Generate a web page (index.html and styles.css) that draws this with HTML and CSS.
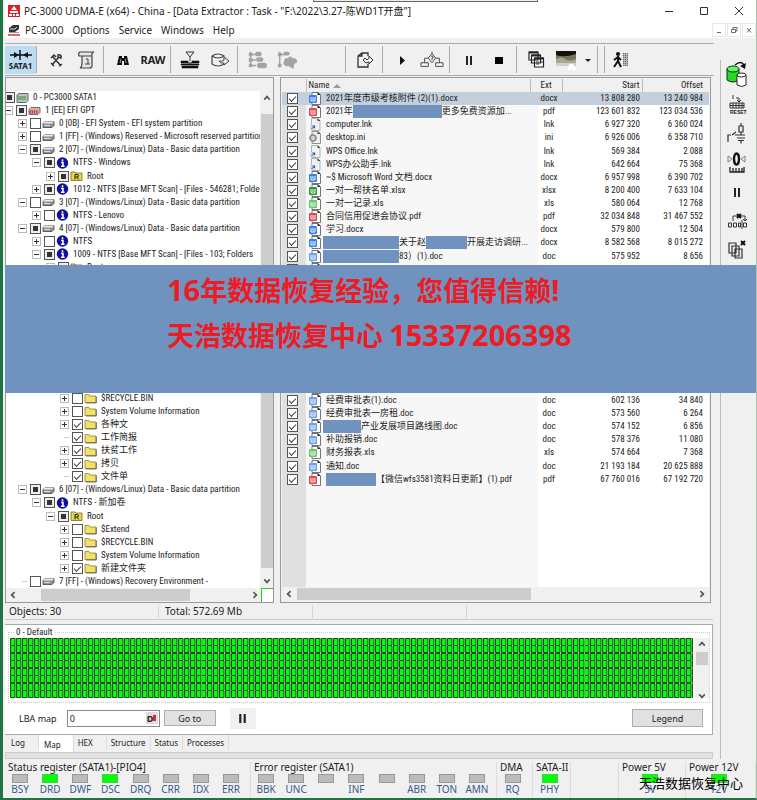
FILE: index.html
```html
<!DOCTYPE html>
<html lang="zh-CN">
<head>
<meta charset="utf-8">
<meta name="viewport" content="width=device-width, initial-scale=1">
<title>PC-3000 UDMA-E</title>
<link rel="stylesheet" href="styles.css">
</head>
<body>
<svg class="sprite" aria-hidden="true">
  <symbol id="i-disk" viewBox="0 0 13 11"><path d="M1 5 3 3h9v4l-2 2H1z" fill="#8f8f8f" stroke="#444" stroke-width=".8"/><path d="M1 5 3 3h9l-1.500 2z" fill="#ececec"/><path d="M2 7h6" stroke="#ddd"/></symbol>
  <symbol id="i-disk0" viewBox="0 0 13 11"><path d="M1 2.500 3 1h9v7l-2 2H1z" fill="#b9c9b9" stroke="#444" stroke-width=".8"/><path d="M2 4.500h8M2 6.500h8" stroke="#3b8a4a"/></symbol>
  <symbol id="i-gpt" viewBox="0 0 13 11"><path d="M1 4 3 2h9v5l-2 2H1z" fill="#d9b0b0" stroke="#555" stroke-width=".8"/><path d="M1.500 5h8v3h-8z" fill="#c23a3a"/><path d="M3 6.500h1m1 0h1m1 0h1" stroke="#fff"/></symbol>
  <symbol id="i-info" viewBox="0 0 13 13"><circle cx="6.500" cy="6.500" r="6.200" fill="#10109a"/><path d="M6.500 2.500v2M5 6h2v3.500M4.800 10h4" stroke="#fff" stroke-width="1.700" fill="none"/></symbol>
  <symbol id="i-folder" viewBox="0 0 13 11"><path d="M1 2h4l1 1.500h6V10H1z" fill="#f0e26a" stroke="#8b8424" stroke-width=".8"/><path d="M12.300 4v6.500H2" stroke="#555" fill="none" stroke-width=".8"/></symbol>
  <symbol id="i-root" viewBox="0 0 13 11"><path d="M1 1.500h4l1 1h6V10H1z" fill="#e2d64a" stroke="#77701c" stroke-width=".8"/><path d="M5 9V4h2q1.500 0 1.500 1.300T7 6.500H5M7 6.500 8.700 9" stroke="#222" fill="none"/></symbol>
  <symbol id="i-doc" viewBox="0 0 12 13"><path d="M3 .5h6l2.500 2.500v9.500H3z" fill="#fff" stroke="#666" stroke-width=".9"/><path d="M8.500 0v3h3z" fill="#222"/><rect x="0" y="3" width="8" height="8" rx="1" fill="var(--tag)"/><path d="M2 5v4h4V5M4 5v3" stroke="#fff" stroke-width=".9" fill="none"/></symbol>
  <symbol id="i-lnk" viewBox="0 0 12 13"><path d="M2.500.5h6l2.500 2.500v9.500H2.500z" fill="#f2f2f2" stroke="#aaa" stroke-width=".9"/><path d="M8.500 0v3h3z" fill="#444"/><path d="M1 7h6v5H1z" fill="#cfdbea"/><path d="M2.500 11l3-3M3.500 8h2v2" stroke="#24579d" fill="none"/></symbol>
  <symbol id="i-ini" viewBox="0 0 12 13"><path d="M3 .5h6l2.500 2.500v9.500H3z" fill="#eee" stroke="#888" stroke-width=".9"/><path d="M8.500 0v3h3z" fill="#444"/><circle cx="4" cy="7" r="3.300" fill="#aaa" stroke="#777"/><path d="M2.500 6h3M2.500 8h3" stroke="#fff"/></symbol>
</svg>

<div class="window">
  <header class="titlebar">
    <svg class="app-icon" viewBox="0 0 12 12"><path fill="#e11c2a" d="M0 0h12v12H0z"/><path d="M6 1 9 5H3zM2 6h8v2H2zM1 9h3v2H1zm4 0h2v2H5zm3 0h3v2H8z" fill="#fff"/></svg>
    <h1 class="title">PC-3000 UDMA-E (x64) - China - [Data Extractor : Task - "F:\2022\3.27-陈WD1T开盘"]</h1>
    <div class="drop-edge"></div>
    <div class="caption">
      <button type="button" aria-label="Minimize"><svg viewBox="0 0 10 10"><path d="M1 5.500h8"/></svg></button>
      <button type="button" aria-label="Maximize"><svg viewBox="0 0 10 10"><path d="M1.500 1.500h7v7h-7z"/></svg></button>
      <button type="button" aria-label="Close"><svg viewBox="0 0 10 10"><path d="m1 1 8 8M9 1 1 9"/></svg></button>
    </div>
  </header>
  <nav class="menubar">
    <svg class="app-icon" viewBox="0 0 12 12"><path d="M1 4 5 1h6v4L7 8H1z" fill="#333"/><path d="M2 5h5l2-2" stroke="#ddd" fill="none"/><path d="M1 8.500h10" stroke="#999"/><path d="M0 11h12" stroke="#d33" stroke-width="1.500"/></svg>
    <a href="#">PC-3000</a><a href="#">Options</a><a href="#">Service</a><a href="#">Windows</a><a href="#">Help</a>
    <div class="mdi">
      <button type="button" aria-label="Minimize child"><svg viewBox="0 0 8 8"><path d="M2 6.500h4"/></svg></button>
      <button type="button" aria-label="Restore child"><svg viewBox="0 0 8 8"><path d="M3 3V1.500h4V5H5.500M1.500 3.500h4v3h-4z"/></svg></button>
      <button type="button" aria-label="Close child"><svg viewBox="0 0 8 8"><path d="m2 2 4 4.500M6 2 2 6.500"/></svg></button>
    </div>
  </nav>

  <div class="body">
    <main class="main">
      <div class="toolbar">
        <div class="group first"><button type="button" class="port"><svg viewBox="0 0 24 12"><path d="M1 6h22M11 1v10" stroke="#111" stroke-width="1.500"/><path d="M5 3v6l5-3zM19 3v6l-5-3z" fill="#111"/></svg><span>SATA1</span></button></div>
        <div class="group">
          <button type="button" aria-label="Settings"><svg viewBox="0 0 20 20"><path d="M6 15 13 7M7 7l8 9M5 8l3-3 2 2M12 5c2-1 4 1 3 3l-3-1zM5 13l3 3M13 16l3-2" stroke="#333" stroke-width="1.500" fill="none"/></svg></button>
          <button type="button" aria-label="Script"><svg viewBox="0 0 20 20"><path d="M4 2h14q-3 1-2 5v9q0 2-3 2H4q2-1 2-4V6H3q-1-3 1-4zM6 6h10" stroke="#444" stroke-width="1.200" fill="#e6e6e6"/><path d="M10 9h2v5M9 14h5" stroke="#444" fill="none"/></svg></button>
        </div>
        <div class="group">
          <button type="button" aria-label="Find"><svg viewBox="0 0 20 20"><path d="m4 15 2-9h3v2h2V6h3l2 9h-5v-4H9v4z" fill="#111"/><path d="m7 13 1-4m5 4-.5-4" stroke="#ddd" stroke-width=".7"/></svg></button>
          <button type="button" class="raw">RAW</button>
        </div>
        <div class="group">
          <button type="button" aria-label="Filter to disk"><svg viewBox="0 0 20 20"><path d="M6 2h8l-4 5zM10 7v4" stroke="#333" fill="none"/><path d="M1 11h7v2h4v-2h7v2H1zM1 14h18v1H1zM2 16h16v2H2z" fill="#111" stroke="#111" stroke-width=".6"/></svg></button>
          <button type="button" aria-label="Disk copy"><svg viewBox="0 0 20 20"><path d="M2 6v8q6 4 12 0v-2M2 6q6-4 12 0-6 4-12 0" stroke="#444" stroke-width="1.200" fill="none"/><path d="M9 11q3 1 5-1V7l5 4-5 4v-2q-3 1-5-2z" fill="#eee" stroke="#444"/></svg></button>
        </div>
        <div class="group wide">
          <button type="button" aria-label="Build map" disabled><svg viewBox="0 0 22 22"><path d="M4 2v14M4 5h6M4 11h6M4 17h6" stroke="#a3a3a3" stroke-width="1.500"/><path d="M2 3h4v4H2zm0 6h4v4H2zm0 6h4v4H2z" fill="#a3a3a3"/><rect x="9" y="2" width="7" height="5" rx="2" fill="#a3a3a3"/><rect x="10" y="8" width="8" height="5" rx="2" fill="#a3a3a3"/><rect x="11" y="14" width="11" height="6" rx="3" fill="#a3a3a3"/></svg></button>
          <button type="button" aria-label="Map objects" disabled><svg viewBox="0 0 22 22"><path d="M3 2v17M3 5h6" stroke="#a3a3a3" stroke-width="1.500"/><path d="M1 3h4v4H1zm0 12h4v4H1z" fill="#a3a3a3"/><rect x="7" y="2" width="7" height="4" rx="2" fill="#a3a3a3"/><path d="M9 9h3l2-2 4 2q5 0 4 5l-3 1-1 6-5-3q-6 0-6-4z" fill="#a3a3a3"/></svg></button>
        </div>
        <div class="group">
          <button type="button" aria-label="Export"><svg viewBox="0 0 20 20"><path d="M13 6V3H7L3 6v11h10v-3M3 6h4V3" stroke="#333" stroke-width="1.300" fill="none"/><path d="m8 10 3 3 3-1v2l4-4-4-4v2l-2 2-2-2z" fill="#eee" stroke="#333"/></svg></button>
        </div>
        <div class="group">
          <button type="button" aria-label="Start"><svg viewBox="0 0 20 20"><path d="m8 6 5 4.500L8 15z" fill="#111"/></svg></button>
          <button type="button" aria-label="Process options" class="big"><svg viewBox="0 0 26 20"><path d="m13 3 4 5-4 5-4-5zM13 1v2M9 8H5v5M17 8h4v5M1 13h8v4H1zM17 13h8v4h-8z" stroke="#444" fill="none"/><path d="M12 6h2v2h-1v2" stroke="#444" fill="none"/></svg></button>
        </div>
        <div class="group">
          <button type="button" aria-label="Pause"><svg viewBox="0 0 20 20"><path d="M7 6h2v9H7zm4 0h2v9h-2z" fill="#222"/></svg></button>
          <button type="button" aria-label="Stop"><svg viewBox="0 0 20 20"><path d="M6 7h8v7H6z" fill="#000"/></svg></button>
        </div>
        <div class="group">
          <button type="button" aria-label="Windows"><svg viewBox="0 0 20 20"><path d="M3 2h9v8H3zM5.500 5h9v8h-9zM8.500 8h9v9h-9z" fill="#fff" stroke="#222" stroke-width="1.200"/><path d="M3 2.500h9M5.500 5.500h9M8.500 8.500h9" stroke="#222" stroke-width="2"/><path d="M10 12h3m2 0h2m-7 2h3" stroke="#333"/></svg></button>
          <button type="button" aria-label="Picture" class="big"><svg viewBox="0 0 22 20"><path fill="#111" d="M1 1h20v7H1z"/><path fill="#77745c" d="M1 5q8 3 20-1v7H1z"/><path fill="#a9a993" d="M1 9q5-3 9 0t11 0v5H1z"/><path fill="#cfd0cc" d="M1 13h20v3H1z"/><path d="M14 14h4l4 6h-9z" fill="#fff"/></svg></button>
          <button type="button" aria-label="More" class="arrow"><svg viewBox="0 0 10 10"><path d="M2 4h6L5 7z" fill="#222"/></svg></button>
        </div>
        <div class="group narrow"></div>
        <div class="group last">
          <button type="button" aria-label="Exit"><svg viewBox="0 0 20 20"><path d="M13 3h5v13h-5z" fill="#b5b5b5"/><path d="M13.500 3v13M15.500 3v13M17.500 3v13" stroke="#666" stroke-dasharray="1 1"/><circle cx="8" cy="4" r="2" fill="#111"/><path d="M8 6v5l3 6M8 11l-4 6M4 10l4-3 3 3" stroke="#111" stroke-width="2" fill="none"/></svg></button>
        </div>
      </div>

      <div class="work">
        <section class="pane tree-pane" aria-label="Partitions">
          <div class="tree-head"></div>
          <div class="tree-body">
            <div class="tree" id="tree"></div>
            <div class="vscroll"><span class="chev up"></span><span class="thumb"></span><span class="chev down"></span></div>
          </div>
          <div class="hscroll"><span class="chev left"></span><span class="thumb"></span><span class="chev right"></span><span class="corner"></span></div>
        </section>
        <section class="pane file-pane" aria-label="Files">
          <div class="file-body">
            <table class="files">
              <colgroup><col class="c-check"><col class="c-name"><col class="c-ext"><col class="c-start"><col class="c-offset"></colgroup>
              <thead><tr><th></th><th class="name">Name <span class="sort"></span></th><th class="ext">Ext</th><th>Start</th><th>Offset</th></tr></thead>
              <tbody id="files"></tbody>
            </table>
          </div>
          <div class="hscroll"><span class="chev left"></span><span class="thumb"></span><span class="chev right"></span></div>
        </section>
      </div>

      <div class="summary"><span>Objects: 30</span><span>Total: 572.69 Mb</span><span></span><span></span></div>

      <section class="map-pane">
        <fieldset class="map-box"><legend>0 - Default</legend>
          <div class="map"></div>
          <div class="vscroll"><span class="chev up"></span><span class="thumb"></span><span class="chev down"></span></div>
        </fieldset>
        <div class="map-controls">
          <label for="lba">LBA map</label>
          <div class="lba-field"><input id="lba" type="text" value="0"><button type="button" aria-label="Decimal"><b>D</b><i></i></button></div>
          <button type="button" class="btn goto">Go to</button>
          <button type="button" class="hold" aria-label="Pause map"><svg viewBox="0 0 10 10"><path d="M2 1h2v8H2zm4 0h2v8H6z" fill="#222"/></svg></button>
          <button type="button" class="btn legend-btn">Legend</button>
        </div>
      </section>
      <div class="tabs"><button type="button">Log</button><button type="button" class="on">Map</button><button type="button">HEX</button><button type="button">Structure</button><button type="button">Status</button><button type="button">Processes</button></div>
      <div class="splitter"></div>
    </main>

    <aside class="side">
      <button type="button" aria-label="Copy disk"><svg viewBox="0 0 24 28"><path d="M2 9v11q6 4 12 0V9" fill="#27d827" stroke="#222"/><ellipse cx="8" cy="9" rx="6" ry="3" fill="#5f5" stroke="#222"/><path d="M12 15v10q5 3 9 0V15" fill="#fff" stroke="#222"/><ellipse cx="16.500" cy="15" rx="4.500" ry="2" fill="#fff" stroke="#222"/><path d="M10 5q6-5 9 0" stroke="#111" stroke-width="1.500" fill="none"/><path d="m21 3-1 6-5-3z" fill="#111"/></svg></button>
      <button type="button" aria-label="Reset"><svg viewBox="0 0 24 24"><path d="M8 2v4M11 5h3v4m-2-2 2 2 2-2" stroke="#333" fill="none"/><path d="M5 10h14v5H5zM8 10v5m3-5v5m3-5v5m3-5v5M5 12.500h14" stroke="#333" fill="none"/><text x="5" y="21" class="reset">RESET</text></svg></button>
      <button type="button" aria-label="Power"><svg viewBox="0 0 24 24"><path d="M3 20v-7h3M7 13l4-3M10 13h10M16 13v-3M14 4h4v6h-4zM16 1v3M12 16h8M13 18.500h6M16 18.500v3" stroke="#333" stroke-width="1.200" fill="none"/></svg></button>
      <button type="button" aria-label="Recalibrate"><svg viewBox="0 0 24 24"><ellipse cx="11.500" cy="8" rx="2.500" ry="5.500" stroke="#111" stroke-width="2.300" fill="none"/><path d="m3 5 4 3-4 3zM20 5l-4 3 4 3z" stroke="#666" fill="none" stroke-width=".8"/><path d="M5 16v5h14v-5M8 21v-4m3 4v-4m3 4v-4m3 4v-4" stroke="#222" stroke-width="1.300" fill="none"/></svg></button>
      <button type="button" aria-label="Hold"><svg viewBox="0 0 24 24"><path d="M9 8h2v9H9zm4 0h2v9h-2z" fill="#222"/></svg></button>
      <button type="button" aria-label="Chain"><svg viewBox="0 0 24 24"><path d="M3.500 14h3v4h-3zm5 0h3v4h-3zm5 0h2v4h-2zM17 11v9M18.500 14h3v4h-3zM8 12V7h12v5m-2-2 2 2 2-2" stroke="#333" fill="none"/><path d="m12 5 4 4m0-4-4 4" stroke="#111" stroke-width="2"/></svg></button>
      <button type="button" aria-label="Close copies"><svg viewBox="0 0 24 24"><path d="M4 5h7v10H4zM7 8h7v10H7zM10 11h7v9h-7z" fill="#eee" stroke="#333" stroke-width="1.200"/><path d="m16 3 4 4m0-4-4 4" stroke="#111" stroke-width="2"/></svg></button>
    </aside>
  </div>

  <footer class="registers" id="registers"></footer>

  <div class="banner"><p><span>16</span>年数据恢复经验，您值得信赖<span>!</span></p><p>天浩数据恢复中心 <span>15337206398</span></p></div>
  <div class="watermark">天浩数据恢复中心</div>
</div>
<script src="app.js"></script>
</body>
</html>
```

FILE: styles.css
```css
* { box-sizing: border-box; }
:root {
  --ui: "Noto Sans", "Noto Sans CJK SC", sans-serif;
  --list: "Roboto Condensed", "Open Sans Condensed", "Liberation Sans", "Noto Sans CJK SC", sans-serif;
  --cover: #6f92be;
}
body { margin: 0; background: #f0f0f0; color: #222; font: 10px/13px var(--ui); }
button, input { font: inherit; color: inherit; margin: 0; padding: 0; }
button { border: 0; background: none; display: flex; align-items: center; justify-content: center; }
a { color: inherit; text-decoration: none; }
.sprite { position: absolute; width: 0; height: 0; }

.window { position: relative; min-height: 100vh; display: flex; flex-direction: column; border: solid #217346; border-width: 0 0 2px 3px; border-right: 1px solid #a9c4b3; padding-left: 2px; overflow: hidden; }
.titlebar { position: relative; display: flex; align-items: center; height: 22px; background: #fff; padding-left: 3px; }
.app-icon { width: 12px; height: 12px; flex: none; }
.title { margin: 0 0 0 4px; font-size: 10px; font-weight: 400; white-space: nowrap; }
.drop-edge { position: absolute; left: 41%; top: 0; width: 30%; height: 2px; border: solid #666; border-width: 0 1px 1px; background: #eee; }
.caption { display: flex; margin-left: auto; }
.caption button { width: 35px; height: 20px; }
.caption svg { width: 10px; height: 10px; fill: none; stroke: #333; }
.menubar { display: flex; align-items: center; gap: 9px; height: 16px; background: #fff; padding-left: 3px; }
.menubar .app-icon { margin-right: -4px; }
.mdi { display: flex; gap: 1px; margin-left: auto; }
.mdi button { width: 14px; height: 14px; border: 1px solid #e8e8e8; }
.mdi svg { width: 8px; height: 8px; fill: none; stroke: #667; }

.body { flex: 1; display: flex; }
.main { flex: 1; min-width: 0; display: flex; flex-direction: column; padding-top: 5px; }
.side { width: 36px; margin-top: 22px; border-left: 1px solid #bbb; display: flex; flex-direction: column; align-items: center; gap: 5px; padding-right: 3px; }
.side svg { width: 24px; height: 24px; display: block; }
.side button:first-child svg { height: 28px; }
.reset { font: bold 5px "Liberation Sans", sans-serif; fill: #222; }

.toolbar { display: flex; height: 33px; margin-right: 6px; border: solid #aaa; border-width: 1px 0; }
.group { display: flex; align-items: center; margin: 2px 0; padding: 0 2px 0 4px; border-right: 1px solid #aaa; }
.group button { width: 30px; height: 28px; }
.group svg { width: 20px; height: 20px; }
.group .big svg { width: 24px; }
.group .arrow { width: 14px; }
.group .arrow svg { width: 10px; height: 10px; }
.group.first { padding: 0; }
.group.wide { width: 108px; }
.group.narrow { padding: 0 3px; }
.group.last { border: 0; padding: 0; }
.group .port { width: 31px; flex-direction: column; background: #bcdcf4; font-weight: 700; font-size: 8px; line-height: 9px; }
.group .port svg { width: 24px; height: 12px; }
.group .raw { font-weight: 700; font-size: 11px; }

.work { flex: 1; display: flex; gap: 6px; padding: 1px 9px 0 0; }
.pane { display: flex; flex-direction: column; border: 1px solid #999; background: #fff; min-width: 0; }
.tree-pane { width: 269px; flex: none; }
.tree-head { height: 13px; background: #f0f0f0; }
.tree-body { flex: 1; display: flex; }
.tree { flex: 1; min-width: 0; display: flex; flex-direction: column; overflow: hidden; font: 9px/13px var(--list); }
.row { flex: 1; display: flex; align-items: center; height: 13px; white-space: nowrap; }
.row label { display: flex; align-items: center; }
.row svg { width: 13px; height: 12px; margin: 0 4px 0 1px; flex: none; }
.exp { position: relative; width: 9px; height: 9px; flex: none; margin-right: 3px; border: 1px solid #bbb; background: linear-gradient(#333, #333) center / 5px 1px no-repeat #fff; }
.exp.plus { background: linear-gradient(#333, #333) center / 5px 1px no-repeat, linear-gradient(#333, #333) center / 1px 5px no-repeat #fff; }
.exp.none { border: 0; background: linear-gradient(#ccc, #ccc) right center / 5px 1px no-repeat; }
.l0 { margin-left: -14px; }
.l1 { margin-left: -2px; }
.l2 { margin-left: 12px; }
.l3 { margin-left: 26px; }
.l4 { margin-left: 40px; }
.l5 { margin-left: 54px; }

input[type="checkbox"] { appearance: none; width: 11px; height: 11px; flex: none; margin: 0; border: 1px solid #555; background: #fff; display: block; }
input[type="checkbox"]:checked::after { content: ""; display: block; width: 6px; height: 3px; margin: 2px 0 0 1px; border: solid #444; border-width: 0 0 1px 1px; rotate: -45deg; }
input[type="checkbox"].part { background: linear-gradient(#333, #333) center / 5px 5px no-repeat #eee; }

.chev { width: 6px; height: 6px; border: solid #555; border-width: 2px 0 0 2px; flex: none; scale: .8; }
.up { rotate: 45deg; }
.down { rotate: 225deg; }
.left { rotate: -45deg; }
.right { rotate: 135deg; }
.thumb { background: #cdcdcd; }
.vscroll { width: 13px; display: flex; flex-direction: column; align-items: center; background: #f0f0f0; padding: 5px 0; }
.vscroll .thumb { width: 12px; flex: 1; margin: 12px 0 9px; }
.hscroll { height: 14px; display: flex; align-items: center; background: #f0f0f0; padding: 0 5px; }
.hscroll .thumb { height: 12px; }
.tree-pane .hscroll { padding-right: 0; }
.tree-pane .thumb { margin-left: 24px; }
.tree-pane .hscroll .thumb { width: 149px; }
.tree-pane .vscroll .thumb { margin-left: 0; }
.tree-pane .right { margin-left: auto; }
.corner { width: 12px; height: 14px; margin-left: 4px; border: solid #1fd01f; border-width: 1px 0 0 1px; background: #fff; }

.file-pane { flex: 1; padding: 1px; background: #f0f0f0; }
.file-body { flex: 1; min-height: 0; background: linear-gradient(90deg, #e0e0e0 24px, #f7f7f7 24px 256px, #fff 256px); }
.files { width: 100%; height: 407px; table-layout: fixed; border-collapse: collapse; font: 9px/13px var(--list); }
.c-check { width: 24px; }
.c-ext { width: 32px; }
.c-start { width: 80px; }
.c-offset { width: 67px; }
.files th, .files td { padding: 0 2px; font-weight: 400; text-align: right; white-space: nowrap; overflow: hidden; }
.files td:last-child, .files th:last-child { padding-right: 6px; }
.files th { background: #f0f0f0; border-right: 1px solid #bbb; }
.files th:last-child { border-right: 0; }
.files .name { text-align: left; }
.files .ext { text-align: center; }
.files td.ext { padding-left: 8px; }
.files td.check { padding: 0 0 0 5px; }
.files .on td { background: #c3d0dc; }
.sort { display: inline-block; border: solid transparent; border-width: 0 4px 4px; border-bottom-color: #999; margin-left: 2px; vertical-align: middle; }
.file { display: flex; align-items: center; height: 13px; padding-left: 1px; }
.file svg { width: 12px; height: 13px; flex: none; margin-right: 5px; }
.w { --tag: #3b82e8; }
.p { --tag: #e2484c; }
.x { --tag: #2f9e3a; }
.y { --tag: #67c66b; }
.d { --tag: #6aa3f0; }
.hide { flex: none; height: 13px; background: var(--cover); }
.h38 { width: 38px; margin-left: -3px; }
.h41 { width: 41px; }
.h50 { width: 50px; }
.h76 { width: 76px; margin-left: -3px; }
.h89 { width: 89px; }
.file-pane .hscroll .thumb { width: 56%; margin-left: 4px; }
.file-pane .right { margin-left: auto; }

.summary { display: flex; height: 17px; align-items: center; margin-right: 7px; border-bottom: 1px solid #ccc; }
.summary span { width: 154px; height: 13px; padding-left: 4px; border-right: 1px solid #d4d4d4; }
.summary span + span { padding-left: 6px; }
.summary span:last-child { border: 0; }

.map-pane { margin: 4px 7px 0 0; padding: 2px 2px 4px 3px; background: #fff; border: solid #aaa; border-width: 1px 1px 1px 0; }
.map-box { min-width: 0; margin: 0; padding: 0 0 4px 1px; border: 1px dotted #ccc; display: flex; font: 9px/11px var(--list); }
.map-box legend { margin-left: 4px; padding: 0 2px; }
.map { flex: 1; height: 60px; background: url("data:image/svg+xml,%3Csvg xmlns='http://www.w3.org/2000/svg' viewBox='0 0 12 16' preserveAspectRatio='none'%3E%3Cpath fill='%23c4e0c4' d='M0 0h12v16H0z'/%3E%3Cpath fill='%2300ff0a' stroke='%23125012' stroke-width='2' d='M1 1h9v14H1z'/%3E%3C/svg%3E") 0 0 / 6px 8px round; }
.map-box .vscroll { width: 15px; margin-left: 1px; padding: 4px 0 0; }
.map-box .vscroll .thumb { flex: none; height: 13px; margin: 4px 0 auto; }
.map-controls { display: flex; align-items: center; height: 24px; margin-top: 3px; padding: 0 7px 0 11px; font-size: 9px; }
.lba-field { display: flex; align-items: center; width: 93px; height: 17px; margin: 0 4px 0 10px; border: 1px solid #888; padding-right: 1px; }
.lba-field input { flex: 1; min-width: 0; border: 0; outline: 0; padding-left: 2px; background: none; }
.lba-field button { width: 12px; height: 12px; background: #ddd; }
.lba-field i { width: 3px; height: 6px; background: #e22; }
.btn { width: 52px; height: 16px; background: #e1e1e1; border: 1px solid #adadad; }
.legend-btn { width: 71px; height: 18px; margin-left: auto; }
.hold { width: 26px; height: 21px; margin-left: 14px; background: #f0f0f0; }
.hold svg { width: 11px; height: 11px; }

.tabs { display: flex; height: 17px; align-items: flex-start; }
.tabs button { height: 15px; padding: 0 4px; border-right: 1px solid #ddd; font: 8px/13px var(--ui); }
.tabs button:nth-child(1) { padding: 0 13px 0 6px; }
.tabs .on { height: 17px; background: #fff; padding: 2px 12px 0 5px; }
.tabs button:nth-child(3) { padding-right: 13px; }
.splitter { height: 7px; margin-right: 7px; background: #e2e2e2; border: 1px solid #ccc; }

.registers { display: flex; height: 39px; padding-top: 3px; }
.reg { position: relative; border-right: 1px solid #ddd; height: 36px; }
.reg h2 { margin: 0; padding-left: 3px; height: 12px; font: 10px/11px var(--ui); white-space: nowrap; }
.leds { display: flex; justify-content: space-around; height: 24px; padding-right: 4px; }
.led { width: 30px; text-align: center; color: #39598c; font: 10px/13px var(--ui); }
.led i { display: block; width: 16px; height: 9px; margin: 0 auto; background: #bbb; border: 1px solid #999; }
.led.lit i { background: #0f0; border-color: #4c4; }
.g-status { width: 246px; }
.g-error { width: 246px; }
.g-dma { width: 36px; }
.g-sata { width: 38px; }
.g-5v { width: 68px; margin-left: auto; border-left: 1px solid #ddd; }
.g-12v { width: 70px; }

.banner { position: absolute; left: 2px; right: -1px; top: 265px; height: 128px; padding: 2px 0 0 162px; background: #6f92be; }
.banner p { margin: 0; font: bold 27px/45px "Noto Sans CJK SC", sans-serif; color: #ed1c24; white-space: nowrap; }
.banner span { font-family: "Noto Sans", sans-serif; font-size: 29px; }
.watermark { position: absolute; right: 13px; bottom: 5px; font: 13px/20px "Noto Sans CJK SC", sans-serif; color: #000; }
```

FILE: app.js
```js
// Tree rows: level, expander (+ - or none), state (0 empty, 1 ticked, 2 partial), icon, label
const tree = [
  [0, " ", 2, "disk0", "0 - PC3000 SATA1"],
  [1, "-", 2, "gpt", "1 [EE] EFI GPT"],
  [2, "+", 0, "disk", "0 [0B] - EFI System - EFI system partition"],
  [2, "+", 0, "disk", "1 [FF] - (Windows) Reserved - Microsoft reserved partition"],
  [2, "-", 2, "disk", "2 [07] - (Windows/Linux) Data - Basic data partition"],
  [3, "-", 2, "info", "NTFS - Windows"],
  [4, "+", 2, "root", "Root"],
  [3, "+", 2, "info", "1012 - NTFS [Base MFT Scan] - [Files - 546281; Folders"],
  [2, "-", 0, "disk", "3 [07] - (Windows/Linux) Data - Basic data partition"],
  [3, "+", 0, "info", "NTFS - Lenovo"],
  [2, "-", 2, "disk", "4 [07] - (Windows/Linux) Data - Basic data partition"],
  [3, "+", 0, "info", "NTFS"],
  [3, "-", 2, "info", "1009 - NTFS [Base MFT Scan] - [Files - 103; Folders"],
  [4, "+", 2, "root", "Root"],
  ...Array(9).fill(null),
  [5, "+", 0, "folder", "$RECYCLE.BIN"],
  [5, "+", 0, "folder", "System Volume Information"],
  [5, "+", 1, "folder", "各种文"],
  [5, " ", 1, "folder", "工作简报"],
  [5, "+", 1, "folder", "扶贫工作"],
  [5, "+", 1, "folder", "拷贝"],
  [5, " ", 1, "folder", "文件单"],
  [2, "-", 2, "disk", "6 [07] - (Windows/Linux) Data - Basic data partition"],
  [3, "-", 2, "info", "NTFS - 新加卷"],
  [4, "-", 2, "root", "Root"],
  [5, "+", 0, "folder", "$Extend"],
  [5, "+", 0, "folder", "$RECYCLE.BIN"],
  [5, "+", 0, "folder", "System Volume Information"],
  [5, "+", 1, "folder", "新建文件夹"],
  [2, " ", 0, "disk", "7 [FF] - (Windows) Recovery Environment -"],
];
const expander = { "+": "plus", "-": "minus", " ": "none" };
document.getElementById("tree").innerHTML = tree.map(r => {
  if (!r) return '<div class="row"></div>';
  const [level, exp, state, icon, text] = r;
  return `<div class="row l${level}"><span class="exp ${expander[exp]}"></span><label>` +
    `<input type="checkbox"${state === 1 ? " checked" : ""}${state === 2 ? ' class="part"' : ""}>` +
    `<svg><use href="#i-${icon}"/></svg>${text}</label></div>`;
}).join("");

// File rows: icon, colour class, name, extension, start, offset. {n} is a covered stretch.
const files = [
  ["doc", "w", "2021年度市级考核附件 (2)(1).docx", "docx", "13 808 280", "13 240 984"],
  ["doc", "p", "2021年{89}更多免费资源加...", "pdf", "123 601 832", "123 034 536"],
  ["lnk", "", "computer.lnk", "lnk", "6 927 320", "6 360 024"],
  ["ini", "", "desktop.ini", "ini", "6 926 006", "6 358 710"],
  ["lnk", "", "WPS Office.lnk", "lnk", "569 384", "2 088"],
  ["lnk", "", "WPS办公助手.lnk", "lnk", "642 664", "75 368"],
  ["doc", "w", "~$ Microsoft Word 文档.docx", "docx", "6 957 998", "6 390 702"],
  ["doc", "x", "一对一帮扶名单.xlsx", "xlsx", "8 200 400", "7 633 104"],
  ["doc", "y", "一对一记录.xls", "xls", "580 064", "12 768"],
  ["doc", "p", "合同信用促进会协议.pdf", "pdf", "32 034 848", "31 467 552"],
  ["doc", "w", "学习.docx", "docx", "579 800", "12 504"],
  ["doc", "w", "{76}关于赵{41}开展走访调研...", "docx", "8 582 568", "8 015 272"],
  ["doc", "d", "{76}83）(1).doc", "doc", "575 952", "8 656"],
  ...Array(10).fill(["doc", "d", "", "", "", ""]),
  ["doc", "d", "经费审批表(1).doc", "doc", "602 136", "34 840"],
  ["doc", "d", "经费审批表一房租.doc", "doc", "573 560", "6 264"],
  ["doc", "d", "{38}产业发展项目路线图.doc", "doc", "574 152", "6 856"],
  ["doc", "d", "补助报销.doc", "doc", "578 376", "11 080"],
  ["doc", "y", "财务报表.xls", "xls", "574 664", "7 368"],
  ["doc", "d", "通知.doc", "doc", "21 193 184", "20 625 888"],
  ["doc", "p", "{50}【微信wfs3581资料日更新】(1).pdf", "pdf", "67 760 016", "67 192 720"],
];
document.getElementById("files").innerHTML = files.map(([icon, tone, name, ext, start, offset], i) =>
  `<tr${i === 0 ? ' class="on"' : ""}><td class="check"><input type="checkbox" checked aria-label="File ${i + 1}"></td>` +
  `<td class="name"><div class="file"><svg class="${tone}"><use href="#i-${icon}"/></svg>` +
  `${name.replace(/\{(\d+)\}/g, '<span class="hide h$1"></span>')}</div></td>` +
  `<td class="ext">${ext}</td><td>${start}</td><td>${offset}</td></tr>`).join("");

// Register groups; a leading * marks a lit lamp.
const groups = [
  ["status", "Status register (SATA1)-[PIO4]", ["BSY", "*DRD", "DWF", "*DSC", "DRQ", "CRR", "IDX", "ERR"]],
  ["error", "Error register (SATA1)", ["BBK", "UNC", "", "INF", "", "ABR", "TON", "AMN"]],
  ["dma", "DMA", ["RQ"]],
  ["sata", "SATA-II", ["*PHY"]],
  ["5v", "Power 5V", ["*5V"]],
  ["12v", "Power 12V", ["*12V"]],
];
document.getElementById("registers").innerHTML = groups.map(([id, title, lamps]) =>
  `<section class="reg g-${id}"><h2>${title}</h2><div class="leds">` +
  lamps.map(t => `<div class="led${t[0] === "*" ? " lit" : ""}"><i></i>${t.replace("*", "")}</div>`).join("") +
  "</div></section>").join("");
```
